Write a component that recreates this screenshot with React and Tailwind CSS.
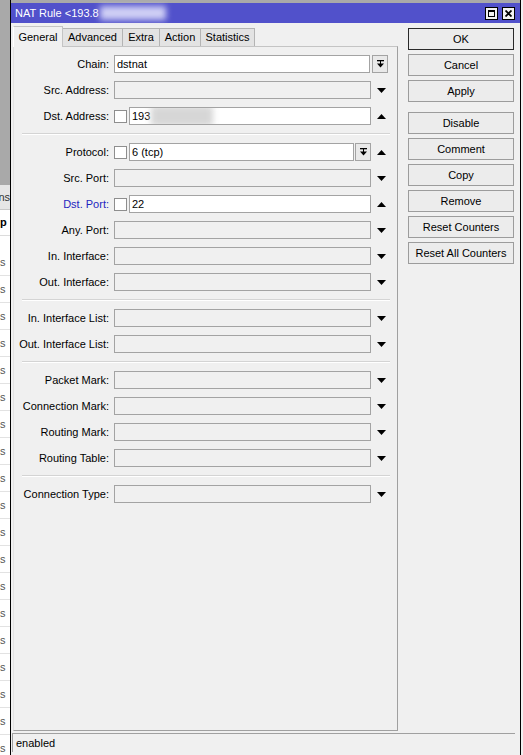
import React from 'react';

const rows = [
  [
    { label: 'Chain:', kind: 'chain', value: 'dstnat' },
    { label: 'Src. Address:', arrow: 'down' },
    { label: 'Dst. Address:', kind: 'check', value: '193', blur: true, arrow: 'up' },
  ],
  [
    { label: 'Protocol:', kind: 'checkdrop', value: '6 (tcp)', arrow: 'up' },
    { label: 'Src. Port:', arrow: 'down' },
    { label: 'Dst. Port:', kind: 'check', value: '22', arrow: 'up', blue: true },
    { label: 'Any. Port:', arrow: 'down' },
    { label: 'In. Interface:', arrow: 'down' },
    { label: 'Out. Interface:', arrow: 'down' },
  ],
  [
    { label: 'In. Interface List:', arrow: 'down' },
    { label: 'Out. Interface List:', arrow: 'down' },
  ],
  [
    { label: 'Packet Mark:', arrow: 'down' },
    { label: 'Connection Mark:', arrow: 'down' },
    { label: 'Routing Mark:', arrow: 'down' },
    { label: 'Routing Table:', arrow: 'down' },
  ],
  [{ label: 'Connection Type:', arrow: 'down' }],
];

const tabs = [
  { name: 'General', w: 'w-[50px]' },
  { name: 'Advanced', w: 'w-[60px]' },
  { name: 'Extra', w: 'w-[37px]' },
  { name: 'Action', w: 'w-[41px]' },
  { name: 'Statistics', w: 'w-[54px]' },
];

const buttons = [
  ['OK', 'Cancel', 'Apply'],
  ['Disable', 'Comment', 'Copy', 'Remove', 'Reset Counters', 'Reset All Counters'],
];

function Arrow({ dir }) {
  return (
    <svg width="9" height="5" viewBox="0 0 9 5">
      <path d={dir === 'up' ? 'M0 5h9L4.5 0z' : 'M0 0h9L4.5 5z'} fill="#000" />
    </svg>
  );
}

function DropButton() {
  return (
    <div className="w-[16px] h-[18px] shrink-0 border border-[#a3a3a3] bg-[#e9e9e9] flex items-center justify-center">
      <svg width="7" height="8" viewBox="0 0 7 8">
        <rect x="0" y="0" width="7" height="1.3" fill="#000" />
        <rect x="3" y="1" width="1" height="3" fill="#000" />
        <path d="M0 3.5h7L3.5 7.5z" fill="#000" />
      </svg>
    </div>
  );
}

function Box({ value, blur, className }) {
  const filled = value !== undefined;
  return (
    <div
      className={`h-[18px] border border-[#a3a3a3] flex items-center pl-[2px] overflow-hidden ${
        filled ? 'bg-white' : 'bg-[#f0f0f0]'
      } ${className}`}
    >
      {value}
      {blur && <span className="ml-[1px] w-[62px] h-[20px] bg-[#d6d6d6] blur-[3px]" />}
    </div>
  );
}

function Check() {
  return <div className="w-[13px] h-[13px] shrink-0 border border-[#8e8e8e] bg-white" />;
}

function Row({ r }) {
  return (
    <div className="flex items-center h-[18px] mb-[8px]">
      <div className={`w-[95px] text-right whitespace-nowrap ${r.blue ? 'text-[#1f1fbf]' : 'text-black'}`}>
        {r.label}
      </div>
      <div className="ml-[5px] w-[257px] flex items-center">
        {r.kind === 'chain' && <Box value={r.value} className="w-[256px]" />}
        {r.kind === 'check' && (
          <>
            <Check />
            <Box value={r.value} blur={r.blur} className="ml-[2px] flex-1" />
          </>
        )}
        {r.kind === 'checkdrop' && (
          <>
            <Check />
            <Box value={r.value} className="ml-[2px] flex-1" />
            <div className="ml-[1px]">
              <DropButton />
            </div>
          </>
        )}
        {!r.kind && <Box className="w-full" />}
      </div>
      {r.kind === 'chain' ? (
        <div className="ml-[1px]">
          <DropButton />
        </div>
      ) : (
        <div className="pl-[6px] flex items-center">
          <Arrow dir={r.arrow} />
        </div>
      )}
    </div>
  );
}

function BackStrip() {
  const lines = Array.from({ length: 19 });
  return (
    <div className="w-[10px] h-full shrink-0 flex flex-col overflow-hidden text-[11px]">
      <div className="h-[185px] bg-[#a9a9a9] shrink-0" />
      <div className="h-[25px] bg-[#e6e6e6] border-b border-[#c8c8c8] flex items-center justify-end shrink-0 overflow-hidden">
        <span className="whitespace-nowrap text-[#333]">ns</span>
      </div>
      <div className="h-[26px] bg-white border-b border-[#dcdcdc] flex items-center shrink-0">
        <span className="font-bold">p</span>
      </div>
      <div className="h-[13px] bg-white shrink-0" />
      {lines.map((_, i) => (
        <div
          key={i}
          className="h-[27px] bg-white border-b border-[#e2e2e2] flex items-center shrink-0 overflow-hidden"
        >
          <span className="text-[#555]">s</span>
        </div>
      ))}
    </div>
  );
}

export default function App() {
  return (
    <div className="w-[523px] h-[755px] flex bg-[#f0f0f0] overflow-hidden font-['Liberation_Sans',Arial,sans-serif] text-[11px] text-black">
      <BackStrip />

      {/* dialog */}
      <div className="w-[511px] h-full border-x border-black flex flex-col bg-[#f0f0f0]">
        <div className="h-[3px] bg-[#a9a9a9] shrink-0" />
        <div className="h-[20px] bg-[#5151cb] flex items-center pl-[4px] pr-[5px] shrink-0">
          <span className="text-white text-[11px] whitespace-nowrap">NAT Rule &lt;193.8</span>
          <span className="ml-[1px] w-[66px] h-[14px] bg-[#cfcff5] blur-[3px]" />
          <div className="ml-auto flex gap-[4px]">
            <div className="w-[13px] h-[13px] border border-black bg-[#f2f2f2] flex items-center justify-center">
              <div className="w-[7px] h-[7px] border border-black border-t-2" />
            </div>
            <div className="w-[13px] h-[13px] border border-black bg-[#f2f2f2] flex items-center justify-center">
              <svg width="7" height="7" viewBox="0 0 7 7">
                <path d="M0.5 0.5L6.5 6.5M6.5 0.5L0.5 6.5" stroke="#000" strokeWidth="1.8" />
              </svg>
            </div>
          </div>
        </div>

        <div className="h-[708px] flex shrink-0">
          {/* left: tabs + panel */}
          <div className="ml-[2px] w-[385px] flex flex-col">
            <div className="h-[23px] flex items-end shrink-0 relative z-10">
              {tabs.map((t, i) =>
                i === 0 ? (
                  <div
                    key={t.name}
                    className={`${t.w} h-[21px] -mb-[1px] bg-[#f0f0f0] border-x border-t border-[#c4c4c4] border-l-white flex items-center justify-center`}
                  >
                    {t.name}
                  </div>
                ) : (
                  <div
                    key={t.name}
                    className={`${t.w} h-[18px] bg-[#e3e3e3] border-t border-r border-[#b4b4b4] flex items-center justify-center`}
                  >
                    {t.name}
                  </div>
                )
              )}
            </div>
            <div className="flex-1 border border-[#a0a0a0] border-t-[#c4c4c4] border-l-[#e2e2e2] pt-[8px]">
              {rows.map((g, gi) => (
                <div key={gi}>
                  {g.map((r) => (
                    <Row key={r.label} r={r} />
                  ))}
                  {gi < rows.length - 1 && (
                    <div className="h-[10px] ml-[8px] w-[368px]">
                      <div className="h-px bg-[#d4d4d4]" />
                      <div className="h-px bg-white" />
                    </div>
                  )}
                </div>
              ))}
            </div>
          </div>

          {/* right: buttons */}
          <div className="ml-[10px] w-[106px] pt-[5px] flex flex-col">
            {buttons.map((grp, gi) => (
              <div key={gi} className={`flex flex-col gap-[4px] ${gi > 0 ? 'mt-[10px]' : ''}`}>
                {grp.map((b) => (
                  <div
                    key={b}
                    className={`h-[22px] flex items-center justify-center bg-[#ececec] border whitespace-nowrap ${
                      b === 'OK' ? 'border-[#2a2a2a]' : 'border-[#9c9c9c]'
                    }`}
                  >
                    {b}
                  </div>
                ))}
              </div>
            ))}
          </div>
        </div>

        {/* status bar */}
        <div className="mt-[2px] ml-[1px] w-[503px] h-[19px] border-t border-l border-[#a0a0a0] flex items-center pl-[3px] shrink-0">
          enabled
        </div>
      </div>
    </div>
  );
}
